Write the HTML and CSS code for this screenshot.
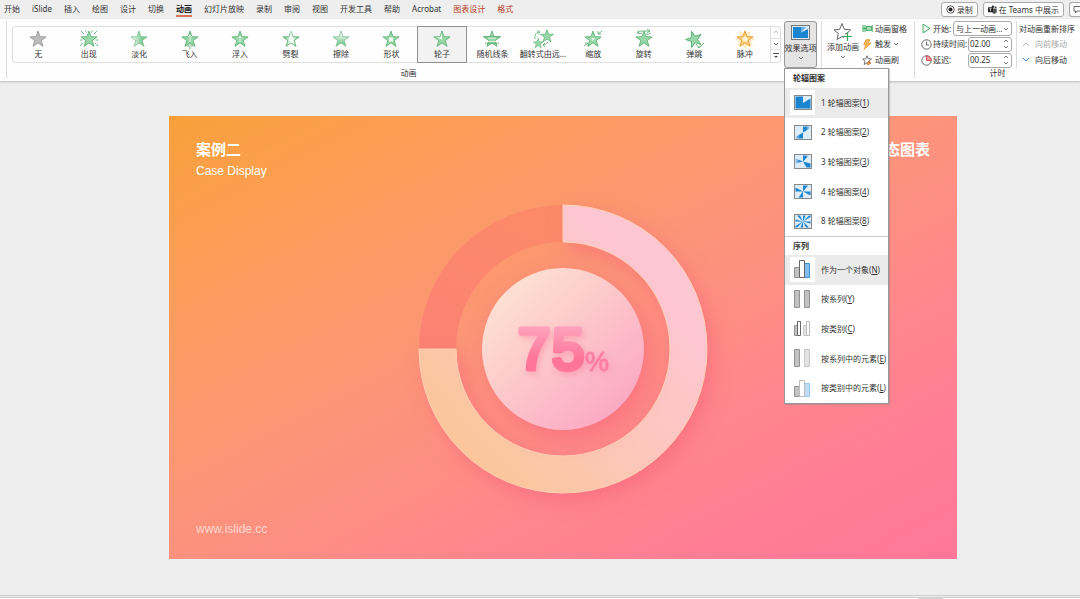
FILE: index.html
```html
<!DOCTYPE html>
<html lang="zh-CN">
<head>
<meta charset="utf-8">
<title>动画</title>
<link rel="stylesheet" href="styles.css">
</head>
<body>
<svg class="defs" aria-hidden="true">
  <defs>
    <linearGradient id="fade"><stop offset="0.15" stop-color="#eef8f0"/><stop offset="0.65" stop-color="#7fcb93"/></linearGradient>
    <linearGradient id="split"><stop offset="0.15" stop-color="#7fcb93"/><stop offset="0.45" stop-color="#f6fcf7"/><stop offset="0.6" stop-color="#f6fcf7"/><stop offset="0.9" stop-color="#7fcb93"/></linearGradient>
    <linearGradient id="wipe" x2="0" y2="1"><stop offset="0.2" stop-color="#f2faf3"/><stop offset="0.8" stop-color="#7fcb93"/></linearGradient>
    <linearGradient id="spoke"><stop offset="0.4" stop-color="#1b84cf"/><stop offset="1" stop-color="#d4e8f7"/></linearGradient>
    <linearGradient id="spoke-back" x1="1" x2="0"><stop offset="0.4" stop-color="#1b84cf"/><stop offset="1" stop-color="#a9d0ee"/></linearGradient>
    <path id="star" d="M10 2L12 7.7 18.1 7.9 13.2 11.6 15 17.4 10 13.9 5 17.4 6.8 11.6 1.9 7.9 8 7.7Z"/>
    <path id="down" d="M1 1L3 3 5 1"/>
  </defs>
</svg>

<header class="topbar">
  <nav class="tabs">
    <button>开始</button><button>iSlide</button><button>插入</button><button>绘图</button><button>设计</button><button>切换</button><button class="current">动画</button><button>幻灯片放映</button><button>录制</button><button>审阅</button><button>视图</button><button>开发工具</button><button>帮助</button><button>Acrobat</button><button class="context">图表设计</button><button class="context">格式</button>
  </nav>
  <div class="actions">
    <button><svg width="9" height="9" viewBox="0 0 9 9"><circle cx="4.500" cy="4.500" r="3.700" fill="none" stroke="#333" stroke-width=".8"/><circle cx="4.500" cy="4.500" r="2" fill="#222"/></svg>录制</button>
    <button><svg width="9" height="9" viewBox="0 0 9 9"><circle cx="5" cy="1.700" r="1.300" fill="#333"/><circle cx="7.700" cy="2.300" r=".9" fill="#333"/><path d="M4 3.500h4.700v2.500a2.300 2.300 0 0 1-4.500 1z" fill="#555"/><rect y="2.300" width="5" height="5" rx=".6" fill="#222"/><path d="M1.300 3.700h2.400M2.500 3.700v2.500" stroke="#fff" stroke-width=".7"/></svg>在 Teams 中展示</button>
    <button class="comment" aria-label="批注"><svg width="9" height="9" viewBox="0 0 9 9"><path d="M1 1.500h8v4.500H4L2.500 8V6H1z" fill="none" stroke="#444" stroke-width=".8"/></svg></button>
  </div>
</header>

<section class="ribbon">
  <div class="group effects">
    <div class="group-body">
      <div class="gallery">
        <div class="items">
          <button><svg viewBox="0 0 20 20" class="gray"><use href="#star"/></svg>无</button>
          <button><svg viewBox="0 0 20 20" class="green"><path d="M2 2l3 3M18 2l-3 3M1 17l3-3M19 17l-3-3M6.500 1.500l1 2M13.500 1.500l-1 2M1 11h2.500M19 11h-2.500" class="line"/><use href="#star"/></svg>出现</button>
          <button><svg viewBox="0 0 20 20" class="green soft"><use href="#star" fill="url(#fade)"/></svg>淡化</button>
          <button><svg viewBox="0 0 20 20" class="green"><use href="#star"/><path d="M10 13V6M8 8l2-2 2 2" class="white"/><path d="M8 15v3M10 15v5M12 15v3" class="line"/></svg>飞入</button>
          <button><svg viewBox="0 0 20 20" class="green"><use href="#star"/><path d="M10 13V7M7.500 9.500l2.500-2.500 2.500 2.500" class="white"/></svg>浮入</button>
          <button><svg viewBox="0 0 20 20" class="green"><use href="#star" fill="url(#split)"/><path d="M10 2v12" class="white"/></svg>劈裂</button>
          <button><svg viewBox="0 0 20 20" class="green soft"><use href="#star" fill="url(#wipe)"/></svg>擦除</button>
          <button><svg viewBox="0 0 20 20" class="green"><use href="#star"/><rect x="8" y="8.500" width="4" height="4" class="hole"/></svg>形状</button>
          <button class="selected"><svg viewBox="0 0 20 20" class="green"><use href="#star"/><path d="M10 10.500V4L8.300 8.300 4 8.600z" class="hole"/></svg>轮子</button>
          <button><svg viewBox="0 0 20 20" class="green"><use href="#star"/><path d="M6 9h8M6 12.500h8" class="white"/><path d="M1 7.700h18M3 14.200h14" class="line"/></svg>随机线条</button>
          <button><svg viewBox="0 0 20 20" class="green"><use href="#star" transform="translate(6 -1) scale(.8)"/><use href="#star" transform="translate(-1 8) scale(.62)"/><path d="M2 10Q1 4 6 3M4 1.500L7 3 5 5.500M15 13q-2 3-5 3l2-2m-2 2l2 2" class="line"/></svg>翻转式由远...</button>
          <button><svg viewBox="0 0 20 20" class="green"><use href="#star"/><path d="M8 9h4l-2 3z" class="hole"/><path d="M19 2l-4 3M15 2v3h3M1 17l4-3M2 14h3v3" class="line"/></svg>缩放</button>
          <button><svg viewBox="0 0 20 20" class="green"><use href="#star"/><path d="M4 5Q2 2 8 2h8M13 0l3 2-3 2M12 5q3 1 5-1M4 2l1 3 3-1" class="line"/></svg>旋转</button>
          <button><svg viewBox="0 0 20 20" class="green"><use href="#star" transform="rotate(-18 10 10)"/><path d="M12 15l3 4 5-5M15 19v-2" class="line"/></svg>弹跳</button>
          <button><svg viewBox="0 0 20 20" class="orange"><path d="M10 0l1.500 4L16 2l-1 4 5 4-4 2 2 5-5-1-3 4-3-4-5 1 2-5-4-2 5-4-1-4 4.500 2z" class="halo"/><use href="#star"/><circle cx="10" cy="10" r="2.500" class="glow"/></svg>脉冲</button>
        </div>
        <div class="scroller">
          <button aria-label="上"><svg class="caret pale" viewBox="0 0 6 4"><path d="M1 3L3 1 5 3"/></svg></button>
          <button aria-label="下"><svg class="caret" viewBox="0 0 6 4"><use href="#down"/></svg></button>
          <button aria-label="更多"><svg class="more" viewBox="0 0 6 6"><path d="M0 .5h6" stroke="#555"/><path d="M1 3h4L3 5z" fill="#555"/></svg></button>
        </div>
      </div>
      <div class="options">
        <button class="big pressed" aria-expanded="true"><svg class="picture" viewBox="0 0 19 15"><rect x=".5" y=".5" width="18" height="14" fill="#d9eaf6" stroke="#777"/><path d="M2 2h8v5.500L17 4v9H2z" fill="#1b84cf"/><path d="M10 7.500V2h5z" fill="#6bb1e3"/></svg><span>效果选项</span><svg class="caret" viewBox="0 0 6 4"><use href="#down"/></svg></button>
        <div class="menu">
          <h2>轮辐图案</h2>
          <div class="choices">
            <button class="chosen"><span class="thumb"><svg viewBox="0 0 18 15"><rect class="frame" x=".5" y=".5" width="17" height="14"/><path d="M1.500 1.500H9V8l7.500-4.500v10h-15z" fill="#1b84cf"/></svg></span><span>1 轮辐图案(<u>1</u>)</span></button>
            <button><span class="thumb"><svg viewBox="0 0 18 15"><rect class="frame" x=".5" y=".5" width="17" height="14"/><path d="M9 1.500h7.500V3L9 7.500z" fill="url(#spoke)"/><path d="M9 7.500v6H1.500V12z" fill="url(#spoke-back)"/></svg></span><span>2 轮辐图案(<u>2</u>)</span></button>
            <button><span class="thumb"><svg viewBox="0 0 18 15"><rect class="frame" x=".5" y=".5" width="17" height="14"/><path d="M9 1.500h6L9 7.500z" fill="url(#spoke)"/><path d="M9 7.500L1.500 4.500v5z" fill="url(#spoke-back)"/><path d="M9 7.500l7.500 2v4h-4z" fill="#1b84cf"/></svg></span><span>3 轮辐图案(<u>3</u>)</span></button>
            <button><span class="thumb"><svg viewBox="0 0 18 15"><rect class="frame" x=".5" y=".5" width="17" height="14"/><path d="M9 7.500v-6h5zM9 7.500h7.500v4zM9 7.500v6H4.500zM9 7.500H1.500v-4z" fill="#1b84cf"/></svg></span><span>4 轮辐图案(<u>4</u>)</span></button>
            <button><span class="thumb"><svg viewBox="0 0 18 15"><rect class="frame" x=".5" y=".5" width="17" height="14"/><path d="M9 7.500v-6h2.500zM9 7.500l6-6h1.500V3zM9 7.500h7.500v2zM9 7.500l6 6h-3zM9 7.500v6H6.500zM9 7.500l-6 6H1.500V12zM9 7.500H1.500v-2zM9 7.500l-6-6h3z" fill="#1b84cf"/></svg></span><span>8 轮辐图案(<u>8</u>)</span></button>
          </div>
          <h2 class="divided">序列</h2>
          <div class="choices">
            <button class="chosen"><span class="thumb"><svg class="bars" viewBox="0 0 17 19"><path d="M.5 7.500h5v10h-5z" class="solid"/><path d="M10.500 3.500h5v14h-5z" class="blue"/><path d="M5.500.5h5v17h-5z" class="hollow"/></svg></span><span>作为一个对象(<u>N</u>)</span></button>
            <button><span class="thumb"><svg class="bars" viewBox="0 0 17 19"><path d="M.5.5h5v17h-5zM10.500.5h5v17h-5z" class="solid"/></svg></span><span>按系列(<u>Y</u>)</span></button>
            <button><span class="thumb"><svg class="bars" viewBox="0 0 17 19"><path d="M.5 6.500h3v10h-3z" class="solid"/><path d="M3.500 2.500h3v14h-3z" class="hollow"/><path d="M9.500 6.500h3v10h-3z" class="light"/><path d="M12.500 2.500h3v14h-3z" class="hollow pale"/></svg></span><span>按类别(<u>C</u>)</span></button>
            <button><span class="thumb"><svg class="bars" viewBox="0 0 17 19"><path d="M.5.5h5v17h-5z" class="solid"/><path d="M10.500.5h5v17h-5z" class="light"/></svg></span><span>按系列中的元素(<u>E</u>)</span></button>
            <button><span class="thumb"><svg class="bars" viewBox="0 0 17 19"><path d="M.5 7.500h5v10h-5z" class="solid"/><path d="M10.500 4.500h5v13h-5z" class="blue light-blue"/><path d="M5.500 1.500h5v16h-5z" class="hollow pale"/></svg></span><span>按类别中的元素(<u>L</u>)</span></button>
          </div>
        </div>
      </div>
    </div>
    <div class="group-name">动画</div>
  </div>

  <div class="group advanced">
    <button class="big"><svg class="add" viewBox="0 0 20 20"><path d="M12 12L14 11.500 17.500 7.800 11.300 7.300 9 1.500 6.700 7.300 1 7.800 5.300 11.500 4 17.500 9 14.500l2 1" fill="none" stroke="#555" stroke-width=".9"/><path d="M14.500 10v9M10 14.500h9" stroke="#35a557" stroke-width="1.200"/></svg><span>添加动画</span><svg class="caret" viewBox="0 0 6 4"><use href="#down"/></svg></button>
    <div class="commands">
      <button><svg viewBox="0 0 11 11"><path d="M1 2v7M3 2v7" stroke="#35a557"/><path d="M1 5.500h3" stroke="#35a557"/><rect x="4.500" y="3.500" width="5" height="4" fill="#a7dbb4" stroke="#35a557" stroke-width=".8"/><path d="M10.300 2v7" stroke="#35a557" stroke-width=".8"/></svg>动画窗格</button>
      <button><svg viewBox="0 0 11 11"><path d="M4 .7h4L6 4.300h3L2 10.300l2-4.500H1.700z" fill="#f9bd55" stroke="#e8871a" stroke-width=".7"/></svg>触发<svg class="caret" viewBox="0 0 6 4"><use href="#down"/></svg></button>
      <button><svg viewBox="0 0 11 11"><path d="M5 .8l1.200 3 3.300.2-2.500 2M5 .8L3.800 3.800.7 4 3 6.200 2.200 9.500 5 7.700" fill="none" stroke="#555" stroke-width=".8"/><path d="M6 6l3 3M5 8l2-2 1.500 2L6 10z" fill="#f6b25a" stroke="#b56422" stroke-width=".8"/></svg>动画刷</button>
    </div>
  </div>

  <div class="group timing">
    <div class="group-body">
      <div class="fields">
        <div class="field"><label for="start"><svg viewBox="0 0 11 11"><path d="M2 1.200l7 4.300-7 4.300z" fill="#eef9f0" stroke="#35a557" stroke-width=".9"/></svg>开始:</label><span class="drop"><select id="start"><option>与上一动画...</option></select><svg class="caret" viewBox="0 0 6 4"><use href="#down"/></svg></span></div>
        <div class="field"><label for="duration"><svg viewBox="0 0 11 11"><circle cx="5.500" cy="5.500" r="4.700" fill="#fff" stroke="#444" stroke-width=".8"/><path d="M5.500 2.500v3.500h2.500" fill="none" stroke="#444" stroke-width=".8"/></svg>持续时间:</label><span class="spin"><input id="duration" value="02.00"><span><svg class="caret" viewBox="0 0 6 4"><path d="M1 3L3 1 5 3"/></svg><svg class="caret" viewBox="0 0 6 4"><use href="#down"/></svg></span></span></div>
        <div class="field"><label for="delay"><svg viewBox="0 0 11 11"><circle cx="5.500" cy="5.500" r="4.700" fill="#fff" stroke="#444" stroke-width=".8"/><path d="M5.500.8a4.700 4.700 0 0 1 4.700 4.700H5.500z" fill="#f3a0a0" stroke="#d8333b" stroke-width=".8"/></svg>延迟:</label><span class="spin"><input id="delay" value="00.25"><span><svg class="caret" viewBox="0 0 6 4"><path d="M1 3L3 1 5 3"/></svg><svg class="caret" viewBox="0 0 6 4"><use href="#down"/></svg></span></span></div>
      </div>
      <div class="order">
        <span>对动画重新排序</span>
        <button disabled><svg class="move" viewBox="0 0 8 6"><path d="M1 5l3-3 3 3"/></svg>向前移动</button>
        <button><svg class="move active" viewBox="0 0 8 6"><path d="M1 1l3 3 3-3"/></svg>向后移动</button>
      </div>
    </div>
    <div class="group-name">计时</div>
  </div>
</section>

<main class="workspace">
  <article class="slide">
    <header class="slide-head">
      <div><h1>案例二</h1><p>Case Display</p></div>
      <h1>态图表</h1>
    </header>
    <svg class="chart" viewBox="0 0 288 288" role="img" aria-label="75%">
      <defs>
        <linearGradient id="ring" gradientUnits="userSpaceOnUse" x1="50" y1="240" x2="235" y2="70"><stop offset="0" stop-color="#fbc69c"/><stop offset=".5" stop-color="#fcc7bc"/><stop offset="1" stop-color="#fdc6d3"/></linearGradient>
        <linearGradient id="disc" x1=".12" y1=".12" x2=".85" y2=".88"><stop offset="0" stop-color="#fde2d3"/><stop offset=".5" stop-color="#fdc6ca"/><stop offset="1" stop-color="#fba9c4"/></linearGradient>
        <linearGradient id="rest" x1=".6" y1="0" x2=".2" y2="1"><stop offset="0" stop-color="#fc8a69"/><stop offset="1" stop-color="#fb8273"/></linearGradient>
        <linearGradient id="digits" x2="0" y2="1"><stop offset=".2" stop-color="#fda0bb"/><stop offset=".65" stop-color="#ff7599"/></linearGradient>
      </defs>
      <path d="M0 144A144 144 0 0 1 144 0V37A107 107 0 0 0 37 144Z" fill="url(#rest)"/>
      <path class="ring" d="M144 0A144 144 0 1 1 0 144H37A107 107 0 1 0 144 37Z" fill="url(#ring)"/>
      <circle class="disc" cx="144" cy="144" r="81" fill="url(#disc)"/>
      <text class="value" x="99 133" y="164" fill="url(#digits)">75</text>
      <text class="unit" x="166" y="166">%</text>
    </svg>
    <footer>www.islide.cc</footer>
  </article>
</main>
<footer class="status"><span></span></footer>
</body>
</html>
```
FILE: styles.css
```css
* { box-sizing: border-box; }
body {
  margin: 0;
  height: 100vh;
  display: flex;
  flex-direction: column;
  overflow: hidden;
  background: #eeeeee;
  color: #333;
  font: 8px/10px "Noto Sans", "Noto Sans CJK SC", sans-serif;
}
button, input, select { font: inherit; color: inherit; }
button { padding: 0; border: 0; background: none; white-space: nowrap; }
h1, h2, p { margin: 0; }
.defs { position: absolute; width: 0; height: 0; }

.topbar { display: flex; justify-content: space-between; height: 19px; flex: none; }
.tabs { display: flex; gap: 12px; padding-left: 4px; }
.tabs button { height: 17px; padding-top: 2px; border-bottom: 2px solid transparent; }
.tabs .current { font-weight: bold; color: #222; border-color: #cf7560; }
.tabs .context { color: #b83b1d; }
.actions { display: flex; gap: 5px; padding-top: 2px; overflow: hidden; }
.actions button {
  display: flex; align-items: center; gap: 2px;
  height: 15px; padding: 0 4px;
  background: #fff; border: 1px solid #aaa; border-radius: 3px;
}
.actions .comment { width: 11px; padding: 0 0 0 3px; border-right: 0; border-radius: 3px 0 0 3px; }
.actions svg { flex: none; }

.ribbon {
  position: relative; z-index: 1;
  display: flex; flex: none; height: 62px;
  padding-left: 6px;
  background: #fefefe;
  box-shadow: 0 1px 2px #bbb;
}
.group { border-left: 1px solid #ddd; margin: 2px 0 3px; }
.group-body { display: flex; height: 47px; }
.group-name { text-align: center; }
.effects { flex: 1; padding: 0 4px 0 5px; }
.effects .group-name { padding-right: 12px; }
.effects .group-body { align-items: flex-start; gap: 3px; }
.caret { width: 6px; height: 4px; flex: none; fill: none; stroke: #555; stroke-width: .8; }
.caret.pale { stroke: #aaa; }

.gallery { display: flex; flex: 1; height: 37px; margin-top: 5px; border: 1px solid #dedede; border-radius: 3px; }
.items { flex: 1; display: grid; grid-template-columns: repeat(15, minmax(0, 1fr)); margin: -1px 0; }
.items button { display: flex; flex-direction: column; align-items: center; padding-top: 2px; border: 1px solid transparent; }
.items .selected { background: #f2f2f2; border-color: #909090; }
.items svg { width: 20px; height: 20px; flex: none; overflow: visible; stroke-width: .8; }
.gray { fill: #bdbdbd; stroke: #919191; }
.green { fill: #98d8a8; stroke: #54ab6c; }
.green.soft { stroke: #7fbd90; }
.orange { fill: #fbd27e; stroke: #e8942c; }
.halo { fill: #fdebc5; stroke: none; }
.glow { fill: #fff3d8; stroke: none; }
.hole { fill: #f4fcf5; stroke: none; }
.line { fill: none; stroke: #54ab6c; }
.white { fill: none; stroke: #f4fcf5; }
.scroller { width: 10px; display: grid; grid-template-rows: repeat(3, 1fr); border-left: 1px solid #dedede; }
.scroller button { display: grid; place-items: center; border-bottom: 1px solid #dedede; }
.scroller button:last-child { border-bottom: 0; }
.more { width: 6px; height: 6px; }

.options { position: relative; }
.big { display: flex; flex-direction: column; align-items: center; height: 47px; }
.pressed { width: 33px; padding-top: 3px; border: 1px solid #999; border-radius: 3px; background: #e4e4e4; }
.picture { width: 19px; height: 15px; margin-bottom: 3px; }
.big .caret { margin-top: 3px; }

.menu {
  position: absolute; top: 47px; left: 0;
  width: 105px;
  background: #fff; border: 1px solid #999; box-shadow: 1px 1px 1px #8886;
}
.menu h2 { height: 19px; padding: 4px 8px 0; font-size: 8px; line-height: 10px; }
.menu h2.divided { border-top: 1px solid #ccc; height: 19px; }
.choices { display: grid; grid-template-rows: repeat(5, 1fr); height: 148px; }
.choices button { display: flex; align-items: center; gap: 6px; padding-left: 5px; }
.choices .chosen { background: #ebebeb; }
.thumb { width: 25px; height: 25px; display: grid; place-items: center; }
.chosen .thumb { background: #fff; }
.thumb svg { width: 18px; height: 15px; }
.thumb .bars { width: 17px; height: 19px; }
.frame { fill: #dcecf8; stroke: #888; }
.solid { fill: #c2c2c2; stroke: #929292; }
.light { fill: #e2e2e2; stroke: #c8c8c8; }
.hollow { fill: #fff; stroke: #666; }
.hollow.pale { stroke: #bbb; }
.blue { fill: #82bdeb; stroke: #3c8fd0; }
.light-blue { fill: #bfdcf4; stroke: #9bc8ec; }

.advanced { display: flex; width: 93px; padding-left: 5px; gap: 3px; }
.advanced .big { padding-top: 1px; }
.add { width: 20px; height: 20px; }
.commands, .order, .fields { display: grid; grid-template-rows: 15px 16px 16px; }
.commands, .order { justify-items: start; }
.commands button { display: flex; align-items: center; gap: 2px; }
.commands svg, .field label svg { width: 11px; height: 11px; flex: none; }
.commands .caret { width: 6px; height: 4px; }

.timing { width: 166px; }
.timing .group-body { padding-left: 6px; }
.fields { width: 91px; }
.field { display: flex; align-items: center; justify-content: space-between; }
.field label { display: flex; align-items: center; gap: 1px; white-space: nowrap; }
.drop, .spin { display: flex; align-items: center; height: 15px; border: 1px solid #aaa; border-radius: 3px; background: #fff; }
.drop { width: 59px; padding-right: 2px; }
.drop select { appearance: none; flex: 1; min-width: 0; padding: 0 0 0 2px; border: 0; background: none; }
.spin { width: 44px; padding-right: 2px; }
.spin input { flex: 1; min-width: 0; width: 20px; padding: 0 0 0 1px; border: 0; background: none; }
.spin > span { display: grid; gap: 2px; }
.order { margin-left: 4px; padding-left: 2px; border-left: 1px solid #ddd; align-items: center; white-space: nowrap; }
.order button { display: flex; align-items: center; gap: 5px; padding-left: 3px; }
.order button:disabled { color: #aaa; }
.move { width: 8px; height: 6px; fill: none; stroke: #bbb; stroke-width: 1; }
.move.active { stroke: #2c87cc; }

.workspace { flex: 1; padding: 35px 123px 0 169px; }
.slide {
  height: 443px;
  display: flex; flex-direction: column;
  padding: 24px 27px 22px;
  color: #fff;
  font-family: "Liberation Sans", "Noto Sans CJK SC", sans-serif;
  background: linear-gradient(152deg, #f8a13a, #fc9c5e 23%, #fc9578 45%, #fe8a88 63%, #ff7d95 84%, #ff7799);
}
.slide-head { display: flex; justify-content: space-between; height: 65px; }
.slide-head h1 { font-size: 15px; line-height: 20px; }
.slide-head p { font-size: 12px; line-height: 22px; }
.chart { width: 288px; height: 288px; flex: none; align-self: center; overflow: visible; }
.ring { stroke: #fdd0b4; stroke-width: 1; filter: drop-shadow(6px 8px 9px #f7607980); }
.disc { filter: drop-shadow(6px 8px 10px #f7607980); }
.value { font-size: 58px; stroke: url(#digits); stroke-width: 5; stroke-linejoin: round; filter: drop-shadow(2px 3px 3px #fb7fa080); }
.unit { font-size: 27px; fill: #fd7fa2; stroke: #fd7fa2; stroke-width: 1; stroke-linejoin: round; filter: drop-shadow(2px 3px 3px #fb7fa080); }
.slide footer { margin-top: auto; font-size: 12px; line-height: 16px; color: #ffd9d2; }
.status { flex: none; height: 4px; border-top: 1px solid #ccc; padding-top: 1px; }
.status span { display: block; height: 2px; border-top: 1px solid #ccc; background: linear-gradient(#d4d4d4, #d4d4d4) 87% 0 / 25px 100% no-repeat #fff; }
```
